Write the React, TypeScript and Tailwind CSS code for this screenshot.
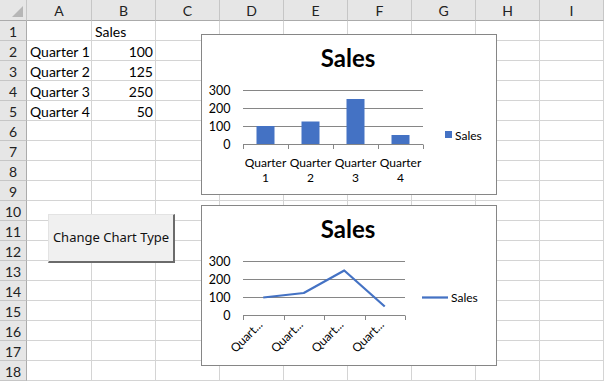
import React from 'react'

const cols = ['A', 'B', 'C', 'D', 'E', 'F', 'G', 'H', 'I']
const rows = Array.from({ length: 18 }, (_, i) => i + 1)

const cells: Record<number, { a?: string; b?: string; bLeft?: boolean }> = {
  1: { b: 'Sales', bLeft: true },
  2: { a: 'Quarter 1', b: '100' },
  3: { a: 'Quarter 2', b: '125' },
  4: { a: 'Quarter 3', b: '250' },
  5: { a: 'Quarter 4', b: '50' },
}

const sales = [100, 125, 250, 50]

function Axis({ right }: { right: number }) {
  return (
    <g>
      {[55.5, 73.5, 91.5].map((y) => (
        <line key={y} x1={41} x2={right} y1={y} y2={y} stroke="#868686" strokeWidth={1} />
      ))}
      <line x1={41} x2={right} y1={109.5} y2={109.5} stroke="#868686" strokeWidth={1} />
      {['300', '200', '100', '0'].map((t, i) => (
        <text key={t} x={28.5} y={59.5 + i * 18} textAnchor="end" fontSize={12.5} fill="#000">
          {t}
        </text>
      ))}
    </g>
  )
}

function BarChart() {
  const step = 45
  return (
    <svg width={294} height={159} className="absolute left-0 top-0" style={{ fontFamily: 'Lato, sans-serif' }}>
      <text x={146} y={32} textAnchor="middle" fontSize={24} fontWeight={700} fill="#000">
        Sales
      </text>
      <Axis right={221} />
      {[0, 1, 2, 3, 4].map((i) => (
        <line key={i} x1={41.5 + i * step} x2={41.5 + i * step} y1={109.5} y2={114} stroke="#868686" />
      ))}
      {sales.map((v, i) => {
        const c = 41 + step * i + step / 2
        const h = v * 0.18
        return <rect key={i} x={c - 9} y={109 - h} width={18} height={h} fill="#4472c4" />
      })}
      {sales.map((_, i) => {
        const c = 41 + step * i + step / 2
        return (
          <g key={i}>
            <text x={c} y={131.5} textAnchor="middle" fontSize={12} fill="#000">
              Quarter
            </text>
            <text x={c} y={147} textAnchor="middle" fontSize={12} fill="#000">
              {i + 1}
            </text>
          </g>
        )
      })}
      <rect x={243} y={96} width={7} height={7} fill="#4472c4" />
      <text x={253} y={104.5} fontSize={12} fill="#000">
        Sales
      </text>
    </svg>
  )
}

function LineChart() {
  const step = 40.5
  const pts = sales.map((v, i) => `${41 + step * i + step / 2},${109.5 - v * 0.18}`).join(' ')
  return (
    <svg width={294} height={159} className="absolute left-0 top-0" style={{ fontFamily: 'Lato, sans-serif' }}>
      <text x={146} y={31.5} textAnchor="middle" fontSize={24} fontWeight={700} fill="#000">
        Sales
      </text>
      <Axis right={203} />
      {[0, 1, 2, 3, 4].map((i) => (
        <line
          key={i}
          x1={Math.round(41 + i * step) + 0.5}
          x2={Math.round(41 + i * step) + 0.5}
          y1={109.5}
          y2={114}
          stroke="#868686"
        />
      ))}
      <polyline points={pts} fill="none" stroke="#4472c4" strokeWidth={2.25} strokeLinejoin="round" />
      {sales.map((_, i) => {
        const c = 41 + step * i + step / 2
        return (
          <text
            key={i}
            x={c}
            y={119.5}
            textAnchor="end"
            fontSize={12}
            fill="#000"
            transform={`rotate(-45 ${c} 119.5)`}
          >
            Quart...
          </text>
        )
      })}
      <line x1={220} x2={246} y1={91.5} y2={91.5} stroke="#4472c4" strokeWidth={2.25} />
      <text x={249} y={96} fontSize={12} fill="#000">
        Sales
      </text>
    </svg>
  )
}

export default function App() {
  return (
    <div
      className="relative w-[604px] h-[381px] overflow-hidden bg-white text-black"
      style={{ fontFamily: 'Lato, "Liberation Sans", sans-serif' }}
    >
      <div className="grid grid-cols-[27px_65px_repeat(8,64px)] grid-rows-[21px_repeat(18,20px)]">
        {/* corner */}
        <div className="relative bg-[#e6e6e6] border-r border-b border-r-[#c6c6c6] border-b-[#ababab]">
          <svg width={26} height={20} className="absolute left-0 top-0">
            <polygon points="12,17 23,6 23,17" fill="#b6b6b6" />
          </svg>
        </div>
        {cols.map((c) => (
          <div
            key={c}
            className="bg-[#e6e6e6] border-r border-b border-r-[#c6c6c6] border-b-[#ababab] flex items-center justify-center text-[14px] text-[#222] pt-[1px]"
          >
            {c}
          </div>
        ))}
        {rows.map((r) => (
          <React.Fragment key={r}>
            <div className="bg-[#e6e6e6] border-r border-b border-r-[#ababab] border-b-[#c6c6c6] flex items-center justify-center text-[14px] text-[#222] pt-[1px]">
              {r}
            </div>
            <div className="border-r border-b border-[#d4d4d4] flex items-center pl-[3px] pt-[1px] text-[14px] whitespace-nowrap">
              {cells[r]?.a}
            </div>
            <div
              className={`border-r border-b border-[#d4d4d4] flex items-center pt-[1px] text-[14px] whitespace-nowrap ${
                cells[r]?.bLeft ? 'pl-[3px]' : 'justify-end pr-[2px]'
              }`}
            >
              {cells[r]?.b}
            </div>
            {cols.slice(2).map((c) => (
              <div key={c} className="border-r border-b border-[#d4d4d4]" />
            ))}
          </React.Fragment>
        ))}
      </div>

      {/* form button */}
      <button
        className="absolute left-[48px] top-[214px] w-[127px] h-[49px] bg-[#f0f0f0] border-t border-l border-[#e3e3e3] border-r-2 border-b-2 border-r-[#6b6b6b] border-b-[#6b6b6b] flex items-center justify-center text-[13px] text-[#111]"
        style={{ fontFamily: '"Noto Sans", "Open Sans", sans-serif' }}
      >
        Change Chart Type
      </button>

      {/* charts */}
      <div className="absolute left-[201px] top-[34px] w-[296px] h-[161px] bg-white border border-[#868686]">
        <BarChart />
      </div>
      <div className="absolute left-[201px] top-[205px] w-[296px] h-[161px] bg-white border border-[#868686]">
        <LineChart />
      </div>
    </div>
  )
}
